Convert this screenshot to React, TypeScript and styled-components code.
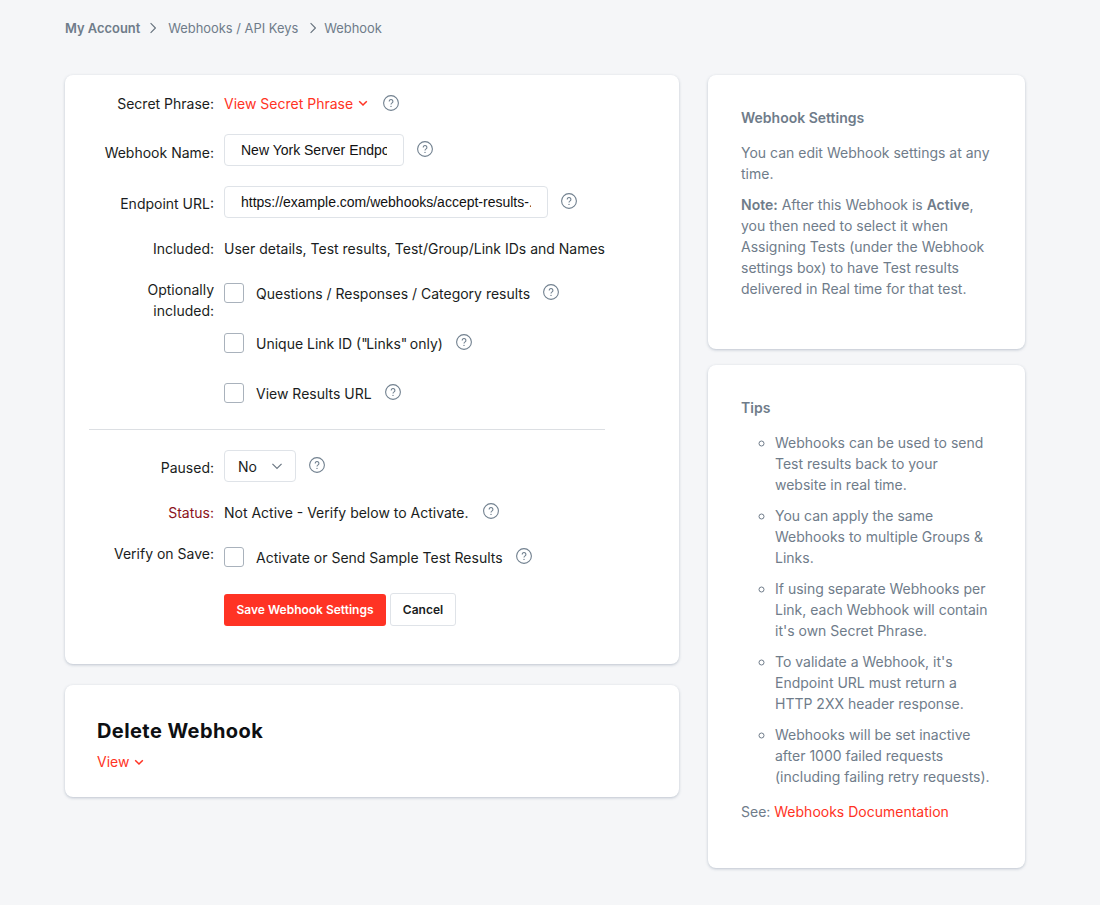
import React from 'react';
import styled, { createGlobalStyle } from 'styled-components';

const GlobalStyle = createGlobalStyle`
  * { box-sizing: border-box; }
  html, body { margin: 0; padding: 0; }
  body {
    background: #f5f6f8;
    font-family: Inter, "Liberation Sans", sans-serif;
    font-size: 14px;
    color: #1a1d21;
  }
`;

const red = '#ff3324';
const gray = '#6f7c8a';

function HelpIcon() {
  return (
    <HelpSvg viewBox="0 0 16 16" aria-hidden="true">
      <circle cx="8" cy="8" r="7.4" fill="none" stroke="#71808f" strokeWidth="1.1" />
      <path d="M6.2 6.4a1.85 1.85 0 1 1 2.9 1.5c-.7.5-1.1.8-1.1 1.6" fill="none" stroke="#71808f" strokeWidth="1.1" />
      <circle cx="8" cy="11.4" r=".7" fill="#71808f" />
    </HelpSvg>
  );
}

function Chevron({ color = red, size = 10, weight = 1.5 }: { color?: string; size?: number; weight?: number }) {
  return (
    <svg width={size} height={size} viewBox="0 0 10 10" aria-hidden="true">
      <path d="M1.2 3.2 5 7l3.8-3.8" fill="none" stroke={color} strokeWidth={weight} />
    </svg>
  );
}

function CrumbArrow() {
  return (
    <svg width="6" height="12" viewBox="0 0 6 12" aria-hidden="true">
      <path d="M.6 1.2 5.4 6 .6 10.8" fill="none" stroke="#66717d" strokeWidth="1.1" />
    </svg>
  );
}

export default function App() {
  return (
    <Page>
      <GlobalStyle />
      <Breadcrumbs>
        <CrumbStrong>My Account</CrumbStrong>
        <CrumbSep $l={10} $r={12}><CrumbArrow /></CrumbSep>
        <span>Webhooks / API Keys</span>
        <CrumbSep $l={12} $r={8}><CrumbArrow /></CrumbSep>
        <span>Webhook</span>
      </Breadcrumbs>
      <Columns>
        <MainColumn>
          <FormCard>
            <Row $h={20} $mb={20}>
              <Label $offset={-1}>Secret Phrase:</Label>
              <RedLink $mr={2} $offset={-1}>
                View Secret Phrase <Chevron />
              </RedLink>
              <HelpIcon />
            </Row>
            <Row $h={32} $mb={20}>
              <Label $offset={2}>Webhook Name:</Label>
              <TextInput $w={180} readOnly value="New York Server Endpoint" />
              <HelpIcon />
            </Row>
            <Row $h={32} $mb={20}>
              <Label $offset={1}>Endpoint URL:</Label>
              <TextInput $w={324} readOnly value="https://example.com/webhooks/accept-results-." />
              <HelpIcon />
            </Row>
            <Row $h={20} $mb={25}>
              <Label>Included:</Label>
              <Value>User details, Test results, Test/Group/Link IDs and Names</Value>
            </Row>
            <OptionalBlock>
              <OptionalLabel>Optionally<br />included:</OptionalLabel>
              <OptionList>
                <CheckRow><Box /><span>Questions / Responses / Category results</span><HelpIcon /></CheckRow>
                <CheckRow><Box /><span>Unique Link ID (<Quote>"</Quote>Links<Quote>"</Quote> only)</span><HelpIcon /></CheckRow>
                <CheckRow><Box /><span>View Results URL</span><HelpIcon /></CheckRow>
              </OptionList>
            </OptionalBlock>
            <Divider />
            <Row $h={32} $mb={20}>
              <Label $offset={1}>Paused:</Label>
              <SelectBox>No<Chevron color="#6b7783" size={12} weight={1} /></SelectBox>
              <HelpIcon />
            </Row>
            <Row $h={20} $mb={25}>
              <Label $danger>Status:</Label>
              <Value $mr={1}>Not Active - Verify below to Activate.</Value>
              <HelpIcon />
            </Row>
            <Row $h={20} $mb={26}>
              <Label $offset={-4}>Verify on Save:</Label>
              <CheckRow><Box /><span>Activate or Send Sample Test Results</span><HelpIcon /></CheckRow>
            </Row>
            <Actions>
              <SaveButton>Save Webhook Settings</SaveButton>
              <CancelButton>Cancel</CancelButton>
            </Actions>
          </FormCard>
          <DeleteCard>
            <DeleteTitle>Delete Webhook</DeleteTitle>
            <RedLink>View <Chevron /></RedLink>
          </DeleteCard>
        </MainColumn>
        <SideColumn>
          <SideCard $h={274}>
            <SideTitle>Webhook Settings</SideTitle>
            <SideText>You can edit Webhook settings at any time.</SideText>
            <SideText>
              <b>Note:</b> After this Webhook is <b>Active</b>, you then need to select it when Assigning Tests (under the Webhook settings box) to have Test results delivered in Real time for that test.
            </SideText>
          </SideCard>
          <SideCard $h={503}>
            <SideTitle>Tips</SideTitle>
            <TipList>
              <li>Webhooks can be used to send Test results back to your website in real time.</li>
              <li>You can apply the same Webhooks to multiple Groups &amp; Links.</li>
              <li>If using separate Webhooks per Link, each Webhook will contain it's own Secret Phrase.</li>
              <li>To validate a Webhook, it's Endpoint URL must return a HTTP 2XX header response.</li>
              <li>Webhooks will be set inactive after 1000 failed requests (including failing retry requests).</li>
            </TipList>
            <SideText>See: <DocLink>Webhooks Documentation</DocLink></SideText>
          </SideCard>
        </SideColumn>
      </Columns>
    </Page>
  );
}

const Page = styled.div`
  width: 1100px;
  height: 905px;
  padding: 18px 75px 0 65px;
  overflow: hidden;
`;

const Breadcrumbs = styled.nav`
  display: flex;
  align-items: center;
  height: 20px;
  font-size: 12.9px;
  color: ${gray};
`;

const CrumbStrong = styled.span`
  font-weight: 600;
`;

const CrumbSep = styled.span<{ $l: number; $r: number }>`
  display: inline-flex;
  margin: 0 ${p => p.$r}px 0 ${p => p.$l}px;
`;

const Columns = styled.div`
  display: flex;
  gap: 29px;
  margin-top: 37px;
`;

const MainColumn = styled.div`
  width: 614px;
  display: flex;
  flex-direction: column;
  gap: 21px;
`;

const SideColumn = styled.div`
  width: 317px;
  display: flex;
  flex-direction: column;
  gap: 16px;
`;

const Card = styled.section`
  background: #fff;
  border-radius: 8px;
  box-shadow: 0 1px 3px rgba(120, 135, 155, 0.45);
`;

const FormCard = styled(Card)`
  height: 589px;
  padding: 19px 24px 0;
`;

const Row = styled.div<{ $h: number; $mb: number }>`
  display: flex;
  align-items: center;
  gap: 10px;
  height: ${p => p.$h}px;
  margin-bottom: ${p => p.$mb}px;
`;

const Label = styled.label<{ $danger?: boolean; $offset?: number }>`
  width: 125px;
  flex: none;
  text-align: right;
  color: ${p => (p.$danger ? '#8b1220' : '#1a1d21')};
  transform: translateY(${p => p.$offset ?? 0}px);
`;

const Value = styled.span<{ $mr?: number }>`
  white-space: nowrap;
  margin-right: ${p => p.$mr ?? 0}px;
`;

const RedLink = styled.a<{ $mr?: number; $offset?: number }>`
  display: inline-flex;
  align-items: center;
  gap: 5px;
  margin-right: ${p => p.$mr ?? 0}px;
  color: ${red};
  cursor: pointer;
  transform: translateY(${p => p.$offset ?? 0}px);
`;

const HelpSvg = styled.svg`
  width: 16px;
  height: 16px;
  flex: none;
  margin-left: 3px;
  transform: translateY(-1px);
`;

const TextInput = styled.input<{ $w: number }>`
  width: ${p => p.$w}px;
  height: 32px;
  padding: 0 16px;
  border: 1px solid #dfe3e8;
  border-radius: 4px;
  outline: none;
  background: #fff;
  font-family: "Liberation Sans", Arial, sans-serif;
  font-size: 14px;
  color: #111;
`;

const OptionalBlock = styled.div`
  display: flex;
  gap: 10px;
  height: 120px;
  margin-bottom: 26px;
`;

const OptionalLabel = styled.div`
  width: 125px;
  flex: none;
  text-align: right;
  line-height: 21px;
  margin-top: -4px;
`;

const OptionList = styled.div`
  display: flex;
  flex-direction: column;
  gap: 30px;
`;

const CheckRow = styled.div`
  display: flex;
  align-items: center;
  gap: 12px;
  height: 20px;
  white-space: nowrap;

  svg {
    margin-left: 1px;
  }
`;

const Quote = styled.span`
  letter-spacing: -1.5px;
`;

const Box = styled.span`
  width: 20px;
  height: 20px;
  flex: none;
  border: 1px solid #a9b2bc;
  border-radius: 3px;
  background: #fff;
`;

const Divider = styled.hr`
  width: 516px;
  height: 1px;
  margin: 0 0 20px;
  border: 0;
  background: #dcdfe3;
`;

const SelectBox = styled.div`
  width: 72px;
  height: 32px;
  padding: 0 12px 0 13px;
  display: flex;
  align-items: center;
  justify-content: space-between;
  border: 1px solid #dfe3e8;
  border-radius: 4px;
`;

const Actions = styled.div`
  display: flex;
  align-items: center;
  gap: 4px;
  margin-left: 135px;
`;

const SaveButton = styled.button`
  width: 162px;
  height: 32px;
  border: 0;
  border-radius: 3px;
  background: ${red};
  color: #fff;
  font: 600 12px Inter, sans-serif;
`;

const CancelButton = styled.button`
  width: 66px;
  height: 33px;
  border: 1px solid #dfe3e8;
  border-radius: 3px;
  background: #fff;
  color: #1a1d21;
  font: 600 12px Inter, sans-serif;
`;

const DeleteCard = styled(Card)`
  height: 112px;
  padding: 32px;
`;

const DeleteTitle = styled.h2`
  margin: 0 0 8px;
  font: 700 20px/28px Inter, sans-serif;
  letter-spacing: 0.42px;
  color: #0d0f12;
`;

const SideCard = styled(Card)<{ $h: number }>`
  height: ${p => p.$h}px;
  padding: 33px 33px 0;
  color: ${gray};
  line-height: 21px;
`;

const SideTitle = styled.h3`
  margin: 0 0 14px;
  font-size: 14px;
  line-height: 20px;
  font-weight: 600;
  color: ${gray};
`;

const SideText = styled.p`
  margin: 0 0 10px;

  b {
    font-weight: 600;
  }
`;

const TipList = styled.ul`
  list-style: circle;
  margin: 0 0 14px;
  padding: 0 0 0 34px;

  li {
    margin-bottom: 10px;
  }
`;

const DocLink = styled.a`
  color: ${red};
`;
